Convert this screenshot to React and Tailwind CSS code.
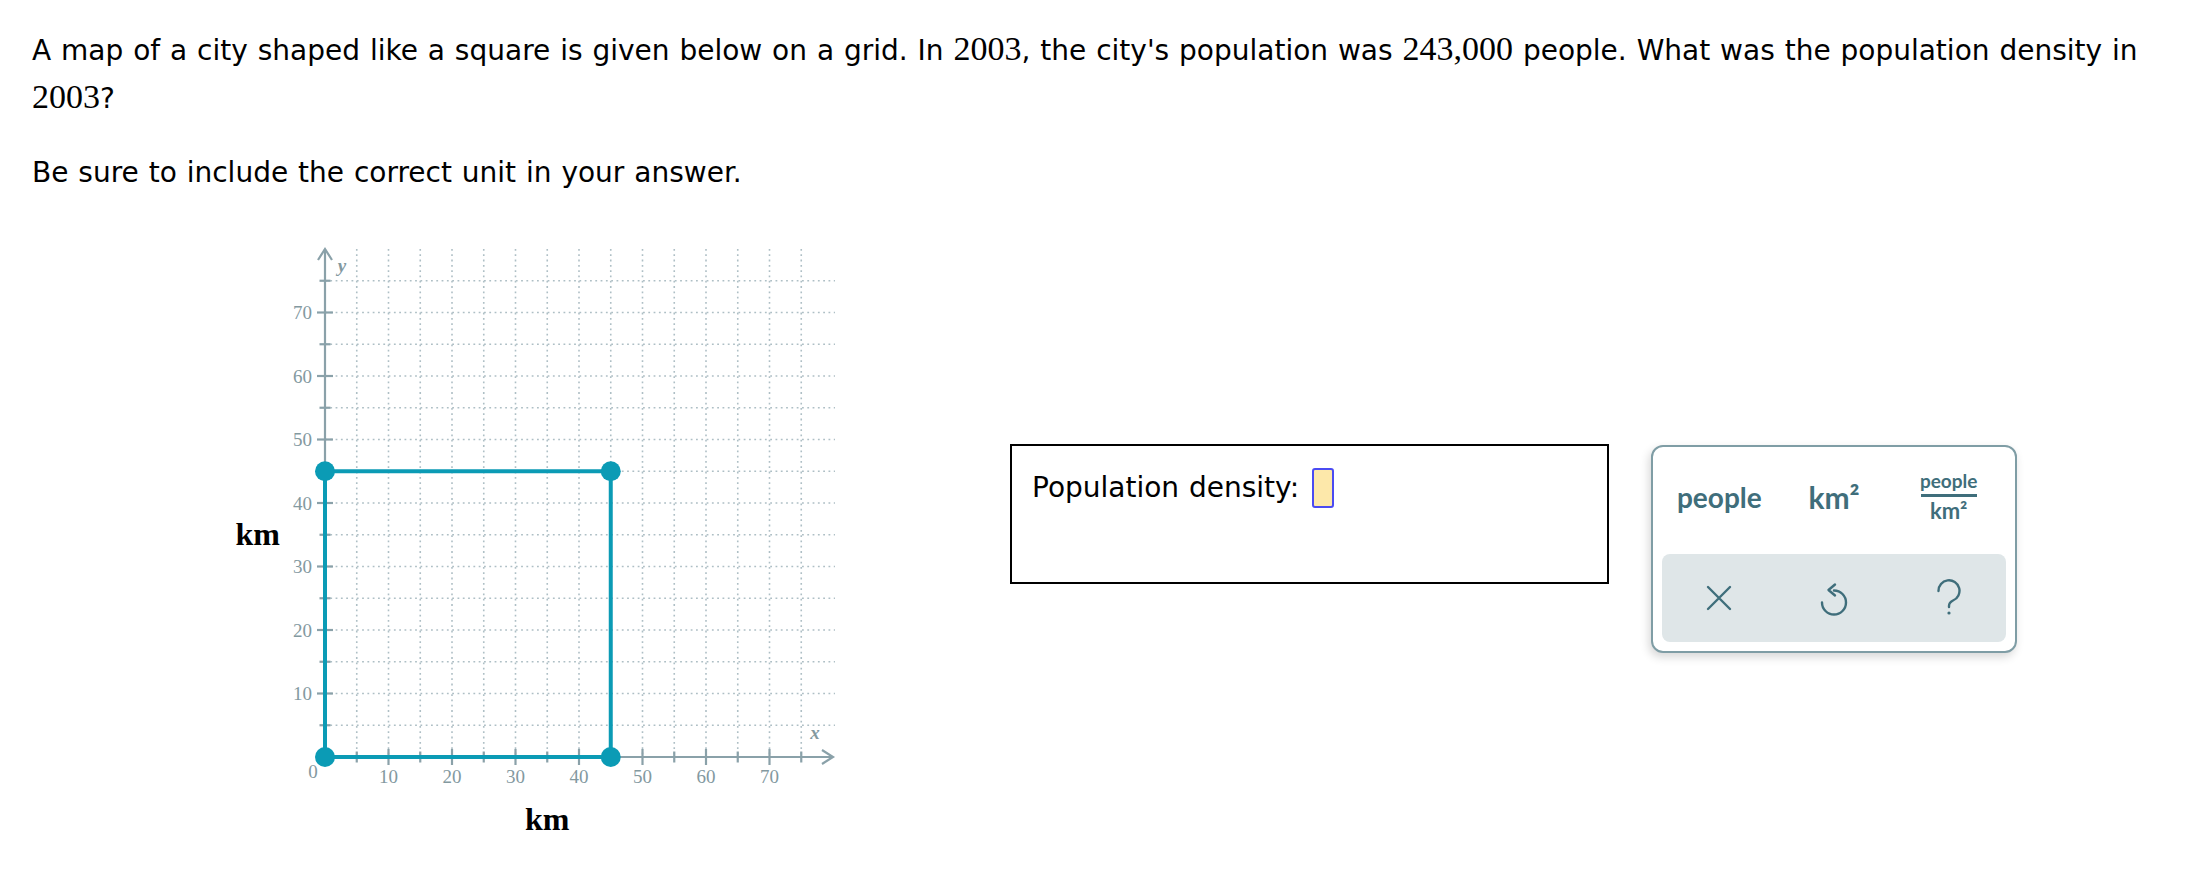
const sans = "font-['DejaVu_Sans',sans-serif]";
const keyText = "font-['Lato',sans-serif] font-bold text-[#3f6e7b]";

// graph geometry: origin in svg coords, 6.35px per unit
const OX = 35;
const OY = 518;
const U = 6.35;
const px = (u) => OX + u * U;
const py = (u) => OY - u * U;
const steps = Array.from({ length: 15 }, (_, i) => (i + 1) * 5);
const labels = [10, 20, 30, 40, 50, 60, 70];

function Num({ children }) {
  return <span className="font-['Liberation_Serif',serif] text-[34px] leading-none">{children}</span>;
}

function Graph() {
  const teal = '#0b9bb5';
  const axis = '#8aa1a9';
  const grid = '#aebfc5';
  const corners = [
    [0, 0],
    [45, 0],
    [0, 45],
    [45, 45],
  ];

  return (
    <svg width="560" height="560" viewBox="0 0 560 560" className="block">
      {steps.map((s) => (
        <line key={`v${s}`} x1={px(s)} y1={10} x2={px(s)} y2={OY} stroke={grid} strokeWidth="1.6" strokeDasharray="1.8 3.5" />
      ))}
      {steps.map((s) => (
        <line key={`h${s}`} x1={OX} y1={py(s)} x2={545} y2={py(s)} stroke={grid} strokeWidth="1.6" strokeDasharray="1.8 3.5" />
      ))}

      <line x1={OX} y1={OY} x2={543} y2={OY} stroke={axis} strokeWidth="2.2" />
      <polyline points="532,511 543,518 532,525" fill="none" stroke={axis} strokeWidth="2.2" />
      <line x1={OX} y1={OY} x2={OX} y2={10} stroke={axis} strokeWidth="2.2" />
      <polyline points="28,21 35,10 42,21" fill="none" stroke={axis} strokeWidth="2.2" />

      {steps.map((s) => {
        const major = s % 10 === 0;
        const d = major ? 8 : 5.5;
        return (
          <g key={`t${s}`}>
            <line x1={px(s)} y1={OY - d} x2={px(s)} y2={OY + d} stroke={axis} strokeWidth="2.2" />
            <line x1={OX - d} y1={py(s)} x2={OX + d} y2={py(s)} stroke={axis} strokeWidth="2.2" />
          </g>
        );
      })}

      <g fill="#83999f" fontFamily="Liberation Serif, serif" fontSize="19">
        {labels.map((l) => (
          <text key={`xl${l}`} x={px(l)} y={544} textAnchor="middle">
            {l}
          </text>
        ))}
        {labels.map((l) => (
          <text key={`yl${l}`} x={22} y={py(l) + 6.5} textAnchor="end">
            {l}
          </text>
        ))}
        <text x={23} y={539} textAnchor="middle">
          0
        </text>
        <text x={52} y={33} fontStyle="italic" fontWeight="bold" textAnchor="middle">
          y
        </text>
        <text x={525} y={500} fontStyle="italic" fontWeight="bold" textAnchor="middle">
          x
        </text>
      </g>

      <rect x={px(0)} y={py(45)} width={45 * U} height={45 * U} fill="none" stroke={teal} strokeWidth="4" />
      {corners.map(([a, b]) => (
        <circle key={`${a}-${b}`} cx={px(a)} cy={py(b)} r="10" fill={teal} />
      ))}
    </svg>
  );
}

function Keypad() {
  return (
    <div className="mt-[206px] ml-[42px] flex h-[208px] w-[366px] flex-col rounded-[12px] border-2 border-[#7f9da5] bg-white px-[9px] pb-[9px] shadow-[-2px_4px_10px_rgba(0,0,0,0.16)]">
      <div className="grid h-[107px] grid-cols-3 items-center justify-items-center pb-[8px]">
        <span className={`${keyText} text-[28px] leading-none`}>people</span>
        <span className={`${keyText} text-[30px] leading-none`}>km²</span>
        <span className="flex flex-col items-center">
          <span className={`${keyText} text-[19px] leading-[22px]`}>people</span>
          <span className="my-[2px] h-[3px] w-[56px] bg-[#3f6e7b]" />
          <span className={`${keyText} text-[22px] leading-[24px]`}>km²</span>
        </span>
      </div>
      <div className="grid flex-1 grid-cols-3 items-center justify-items-center rounded-[8px] bg-[#dfe6e8]">
        <svg width="26" height="26" viewBox="0 0 26 26" fill="none" stroke="#3f6e7b" strokeWidth="2.4" strokeLinecap="round">
          <path d="M2 2 24 24M24 2 2 24" />
        </svg>
        <svg width="30" height="36" viewBox="0 0 30 36" fill="none" stroke="#3f6e7b" strokeWidth="2.4" strokeLinecap="round" strokeLinejoin="round">
          <path d="M15 10.5 A12 12 0 1 1 3 22.5" />
          <path d="M16 4.5 9.5 10 16 15.5" />
        </svg>
        <svg width="26" height="38" viewBox="0 0 26 38" fill="none" stroke="#3f6e7b" strokeWidth="2.4" strokeLinecap="round">
          <path d="M2.5 12 A10.5 10.5 0 1 1 17 21.5 Q13 23.5 13 27 V28" />
          <circle cx="13" cy="34" r="1.6" fill="#3f6e7b" stroke="none" />
        </svg>
      </div>
    </div>
  );
}

export default function App() {
  return (
    <div className={`${sans} min-h-[890px] bg-white pl-[32px] pr-[32px] pt-[27px] text-black [word-spacing:1px]`}>
      <p className="text-[28px] leading-[48px]">
        A map of a city shaped like a square is given below on a grid. In <Num>2003</Num>, the city's population was{' '}
        <Num>243,000</Num> people. What was the population density in <Num>2003</Num>?
      </p>
      <p className="mt-[26px] text-[28px] leading-[48px]">Be sure to include the correct unit in your answer.</p>

      <div className="mt-[42px] flex items-start">
        <div className="w-[258px] pt-[275px] pr-[10px] text-right font-['Liberation_Serif',serif] text-[32px] font-bold leading-[40px]">
          km
        </div>
        <div className="flex flex-col">
          <Graph />
          <div className="pl-[235px] font-['Liberation_Serif',serif] text-[32px] font-bold leading-[40px]">km</div>
        </div>

        <div className="mt-[205px] ml-[160px] h-[140px] w-[599px] border-2 border-black pl-[20px] pt-[22px]">
          <div className="flex h-[40px] items-center text-[28px] leading-[40px]">
            <span>Population density:</span>
            <span className="ml-[13px] h-[40px] w-[22px] rounded-[3px] border-2 border-[#4b4bf2] bg-[#fde8aa]" />
          </div>
        </div>

        <Keypad />
      </div>
    </div>
  );
}
